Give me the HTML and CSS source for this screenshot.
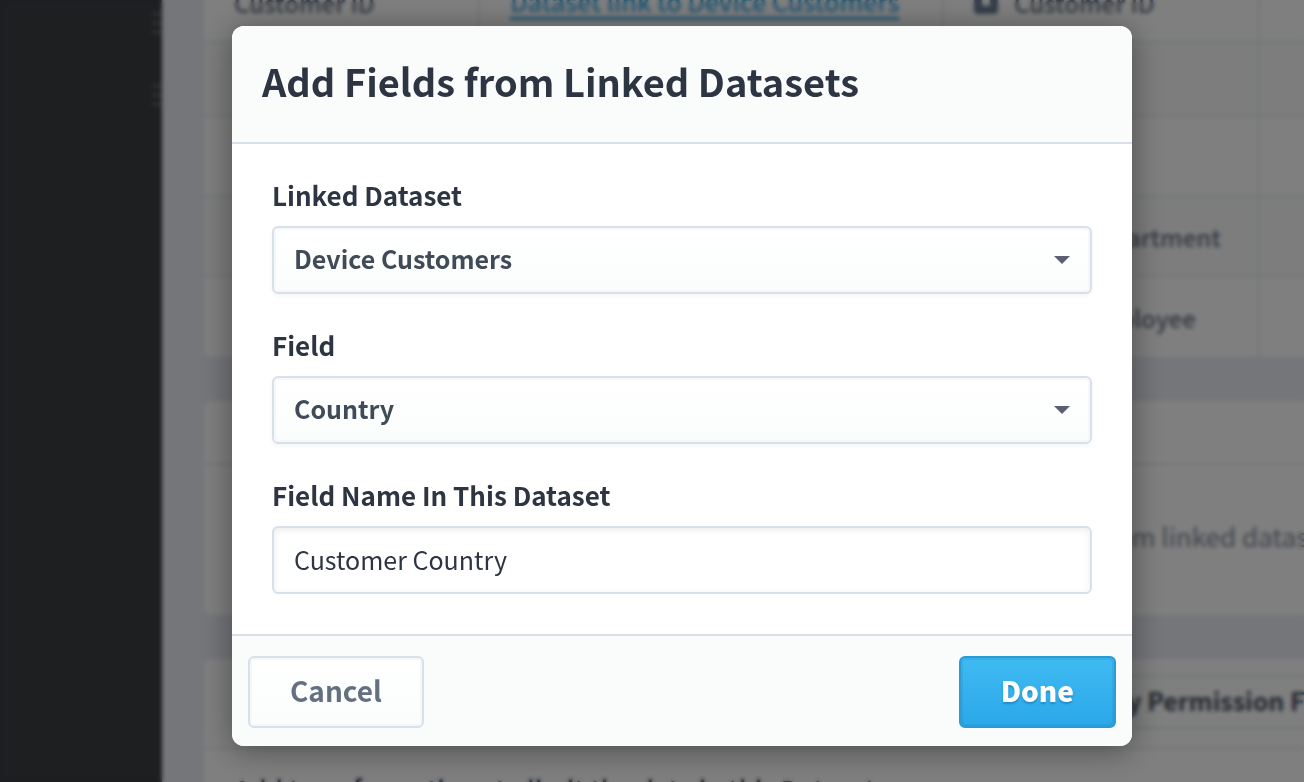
FILE: index.html
```html
<!DOCTYPE html>
<html lang="en">
<head>
  <meta charset="UTF-8">
  <meta name="viewport" content="width=device-width, initial-scale=1.0">
  <title>Add Fields from Linked Datasets</title>
  <link rel="stylesheet" href="styles.css">
</head>
<body>
  <div class="page">
    <aside class="sidebar">
      <span class="handle"></span>
      <span class="handle"></span>
    </aside>
    <main class="content">
      <section class="card mapping">
        <div class="row">
          <div class="cell">Customer ID</div>
          <div class="cell"><a class="dataset-link" href="#">Dataset link to Device Customers</a></div>
          <div class="cell">
            <svg class="key-icon" viewBox="0 0 24 24"><rect width="24" height="24" rx="4" fill="#6b7b92"/><rect x="8" y="8" width="8" height="8" rx="2" fill="#fff"/></svg>
            Customer ID
          </div>
          <div class="cell"></div>
        </div>
        <div class="row group">
          <div class="cell"></div><div class="cell"></div><div class="cell"></div><div class="cell"></div>
        </div>
        <div class="row">
          <div class="cell"></div><div class="cell"></div><div class="cell"></div><div class="cell"></div>
        </div>
        <div class="row">
          <div class="cell"></div><div class="cell"></div><div class="cell name">User Department</div><div class="cell"></div>
        </div>
        <div class="row">
          <div class="cell"></div><div class="cell"></div><div class="cell name">User Employee</div><div class="cell"></div>
        </div>
      </section>
      <section class="card linked">
        <div class="card-head"></div>
        <p class="empty">There are no fields from linked datasets</p>
      </section>
      <section class="card filters">
        <div class="filters-head">
          <button class="filter-button" type="button">Apply Permission Filter</button>
        </div>
        <p class="note">Add transformations to limit the data in this Dataset</p>
      </section>
    </main>
  </div>

  <div class="overlay">
    <form class="modal" role="dialog" aria-labelledby="modal-title">
      <header class="modal-header">
        <h1 id="modal-title">Add Fields from Linked Datasets</h1>
      </header>
      <div class="modal-body">
        <div class="field">
          <label for="dataset">Linked Dataset</label>
          <div class="select">
            <select id="dataset">
              <option>Device Customers</option>
            </select>
            <svg class="arrow" viewBox="0 0 16 8"><path d="M0 0h16L8 8z"/></svg>
          </div>
        </div>
        <div class="field">
          <label for="field">Field</label>
          <div class="select">
            <select id="field">
              <option>Country</option>
            </select>
            <svg class="arrow" viewBox="0 0 16 8"><path d="M0 0h16L8 8z"/></svg>
          </div>
        </div>
        <div class="field">
          <label for="name">Field Name In This Dataset</label>
          <input id="name" type="text" value="Customer Country">
        </div>
      </div>
      <footer class="modal-footer">
        <button class="button" type="button">Cancel</button>
        <button class="button primary" type="button">Done</button>
      </footer>
    </form>
  </div>
</body>
</html>
```
FILE: styles.css
```css
*{
  box-sizing: border-box;
  font-family: "Noto Sans CJK SC", "Noto Sans", sans-serif;
}
body{
  margin: 0;
  height: 100vh;
  overflow: hidden;
  color: #2d3542;
}

/* page behind the dialog */
.page{
  display: flex;
  height: 100%;
  overflow: hidden;
  background: #e8ecf4;
}
.sidebar{
  flex: none;
  width: 162px;
  background: #3c3e42;
  display: flex;
  flex-direction: column;
  align-items: flex-end;
  gap: 50px;
  padding-top: 13px;
}
.handle{
  width: 10px;
  height: 22px;
  background: repeating-linear-gradient(#74777e 0 2px, transparent 2px 9px);
}
.content{
  flex: 1;
  min-width: 0;
  overflow: hidden;
  padding-left: 42px;
}
.card{
  min-width: 1240px;
  background: #fff;
  border-radius: 8px;
  margin-bottom: 44px;
  overflow: hidden;
}
.mapping{
  margin-top: -37px;
}
.row{
  display: grid;
  grid-template-columns: 276px 464px 316px 1fr;
  height: 80px;
  border-bottom: 2px solid #e6ebf0;
  font-size: 24px;
  font-weight: 500;
  color: #647082;
}
.row:last-child{
  border-bottom: 0;
}
.row:nth-child(even){
  background: #fafbfb;
}
.group{
  height: 74px;
}
.cell{
  display: flex;
  align-items: center;
  gap: 16px;
  padding: 0 30px;
  border-right: 2px solid #e6ebf0;
  white-space: nowrap;
}
.name{
  padding-left: 80px;
}
.dataset-link{
  color: #36a9e6;
  font-size: 25px;
  line-height: 32px;
  text-decoration: none;
  border-bottom: 3px solid #36a9e6;
}
.key-icon{
  width: 24px;
  height: 24px;
}
.card-head{
  height: 64px;
  border-bottom: 2px solid #e6ebf0;
}
.empty{
  margin: 0;
  padding: 0 0 8px 664px;
  font-size: 26px;
  line-height: 142px;
  color: #7d8999;
}
.filters-head{
  display: flex;
  padding: 16px 0 18px 841px;
  border-bottom: 2px solid #e6ebf0;
}
.filter-button{
  height: 54px;
  padding: 0 24px 4px;
  border: 2px solid #dfe6ed;
  border-radius: 6px;
  background: #fff;
  color: #414c5c;
  font-size: 25px;
  font-weight: 700;
}
.note{
  margin: 20px 30px;
  font-size: 26px;
  font-weight: 500;
  line-height: 40px;
}

/* dialog */
.overlay{
  position: fixed;
  inset: 0;
  display: flex;
  align-items: flex-start;
  padding: 26px 172px 26px 232px;
  background: rgba(0, 0, 0, .5);
  backdrop-filter: blur(2px);
}
.modal{
  flex: 1;
  border-radius: 12px;
  background: #fff;
  box-shadow: 0 4px 32px rgba(0, 0, 0, .4);
  overflow: hidden;
}
.modal-header{
  padding: 25px 30px 31px;
  background: #fafcfc;
  border-bottom: 2px solid #d8e0ea;
}
h1{
  margin: 0;
  font-size: 38px;
  font-weight: 600;
  line-height: 60px;
}
.modal-body{
  display: flex;
  flex-direction: column;
  gap: 31px;
  padding: 31px 40px 40px;
}
.field{
  display: flex;
  flex-direction: column;
  gap: 11px;
}
label{
  font-size: 26px;
  font-weight: 600;
  line-height: 40px;
}
.select{
  display: grid;
  align-items: center;
}
.select select,
.arrow{
  grid-area: 1 / 1;
}
select,
input{
  width: 100%;
  height: 68px;
  padding: 0 20px 2px;
  border: 2px solid #d8e0ea;
  border-radius: 6px;
  color: #2d3542;
  font-size: 25px;
}
select{
  appearance: none;
  padding-bottom: 4px;
  background: linear-gradient(#fff, #fbfdfd);
  box-shadow: inset 0 0 0 2px #f5f8fb, 0 2px 4px rgba(40, 60, 90, .05);
  color: #414b58;
  font-weight: 600;
}
input{
  background: #fff;
  box-shadow: inset 0 2px 6px rgba(40, 60, 90, .1);
}
.arrow{
  justify-self: end;
  width: 16px;
  height: 8px;
  margin-right: 22px;
  fill: #5a6072;
  pointer-events: none;
}
.modal-footer{
  display: flex;
  justify-content: space-between;
  padding: 20px 16px 18px;
  background: #fafcfc;
  border-top: 2px solid #d8e0ea;
}
.button{
  height: 72px;
  padding: 0 40px 4px;
  border: 2px solid #d8e0ea;
  border-radius: 6px;
  background: linear-gradient(#fff, #fbfdfd);
  box-shadow: inset 0 0 0 2px #f5f8fb;
  color: #647082;
  font-size: 28px;
  font-weight: 600;
}
.primary{
  border-color: #2b9bd2;
  background: linear-gradient(#3fbaf1, #2aa8e9);
  box-shadow: inset 0 0 0 2px rgba(0, 110, 180, .12);
  color: #fff;
  font-weight: 900;
  text-shadow: 0 2px 2px rgba(0, 60, 110, .3);
}
```
